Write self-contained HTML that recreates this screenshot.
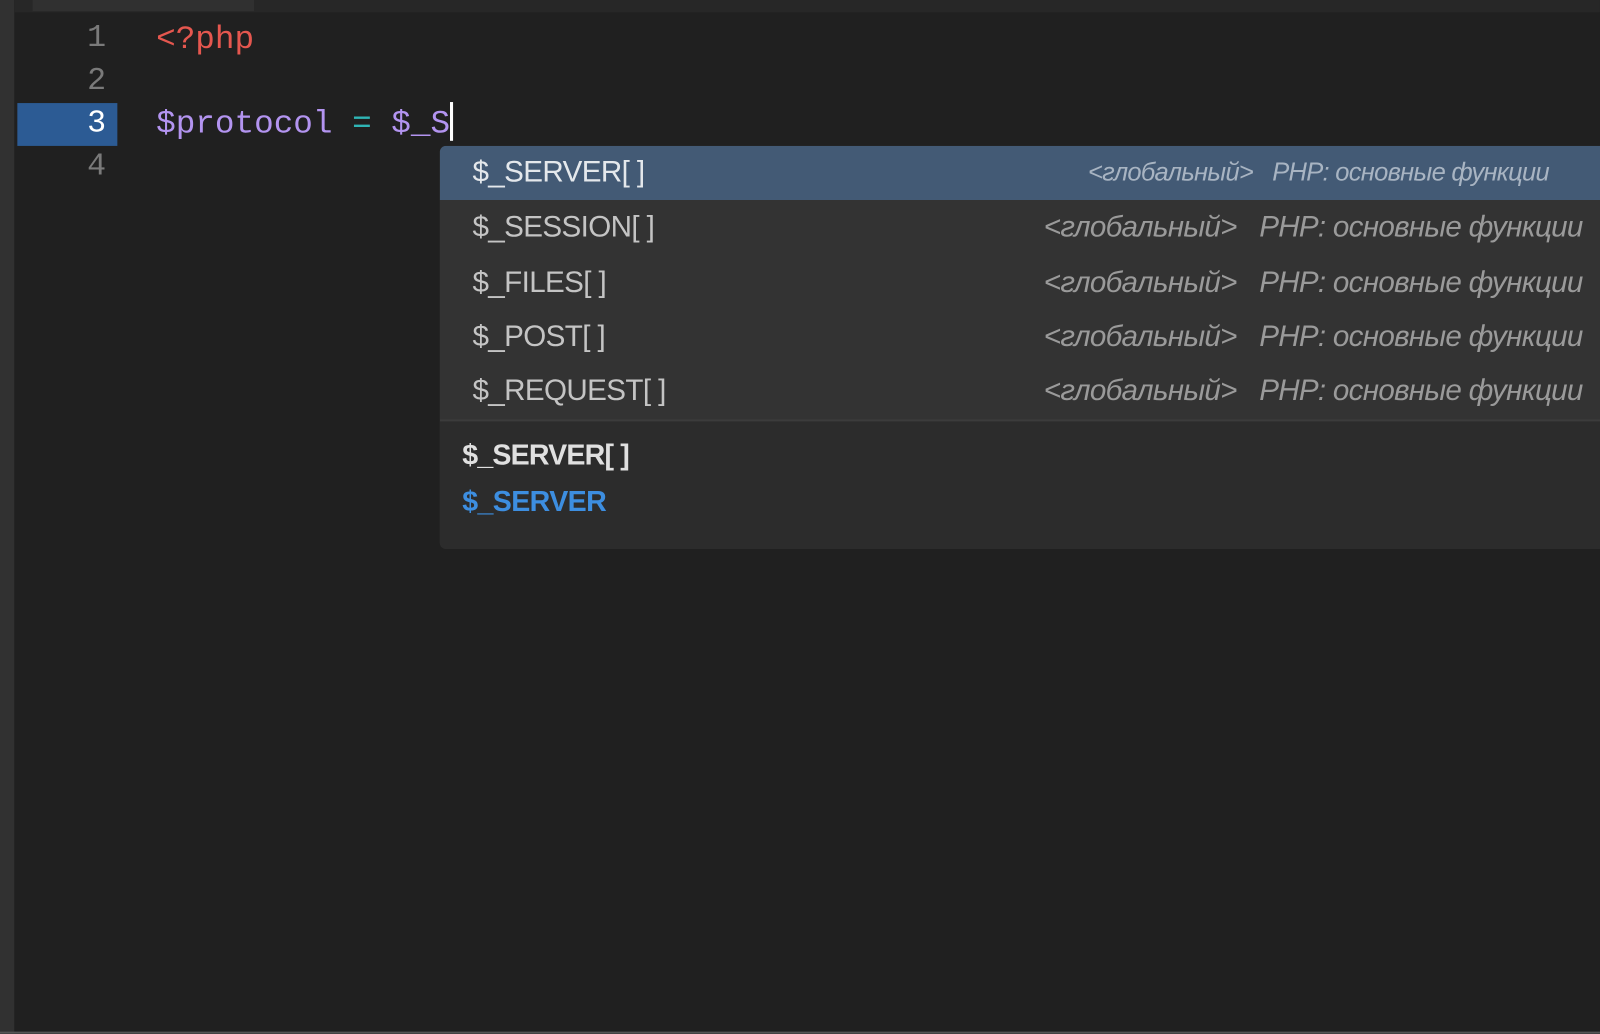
<!DOCTYPE html>
<html><head><meta charset="utf-8"><style>
html,body{margin:0;padding:0;}
body{width:1600px;height:1033px;background:#202020;position:relative;overflow:hidden;font-family:"Liberation Sans",sans-serif;}
#c{position:absolute;left:0;top:0;width:1568px;height:1013px;transform:scale(1.0204);transform-origin:0 0;}
.lstrip{position:absolute;left:0;top:0;width:14px;height:1013px;background:#313131;}
.topbar{position:absolute;left:14px;top:0;right:0;height:12px;background:#272727;}
.tab{position:absolute;left:18px;top:0;width:217px;height:11px;background:#303030;}
.bottom{position:absolute;left:0;bottom:0;width:1568px;height:2px;background:#555;}
.ln{position:absolute;left:17px;width:98px;height:42px;line-height:42px;text-align:right;box-sizing:border-box;padding-right:11px;font-family:"Liberation Mono",monospace;font-size:31px;color:#7a7a7a;}
.ln.cur{background:#2c5b94;color:#fff;}
.code{position:absolute;left:153px;height:42px;line-height:42px;font-family:"Liberation Mono",monospace;font-size:32px;white-space:pre;}
.caret{display:inline-block;width:3px;height:38px;background:#fff;vertical-align:middle;margin-top:-6px;}
.pop{position:absolute;left:431px;top:143px;width:1150px;height:395px;background:#333333;border-radius:6px;overflow:hidden;}
.row{position:absolute;left:0;width:100%;height:54px;}
.row.sel{background:#435a75;height:53px;}
.name{position:absolute;left:32px;top:0;line-height:54px;font-size:29px;color:#c4c4c4;white-space:pre;letter-spacing:-0.6px;}
.row.sel .name{color:#e4e8ec;line-height:53px;}
.desc{position:absolute;right:30px;top:0;line-height:54px;font-size:29px;font-style:italic;color:#9a9a9a;white-space:pre;letter-spacing:-0.7px;}
.row.sel .desc{right:63px;color:#a8b4c2;font-size:25px;line-height:53px;}
.detail{position:absolute;left:0;top:268px;width:100%;height:127px;background:#2c2c2c;border-top:2px solid #3c3c3c;}
.d1{position:absolute;left:22px;top:17px;font-size:28px;font-weight:bold;color:#e0e0e0;letter-spacing:-0.8px;white-space:pre;}
.d2{position:absolute;left:22px;top:63px;font-size:28px;font-weight:bold;color:#3d8ee0;letter-spacing:-0.6px;}
</style></head><body>
<div id="c">
<div class="lstrip"></div>
<div class="topbar"><div class="tab"></div></div>
<div class="ln" style="top:17px">1</div>
<div class="ln" style="top:59px">2</div>
<div class="ln cur" style="top:101px">3</div>
<div class="ln" style="top:143px">4</div>
<div class="code" style="top:18px;color:#e5574f">&lt;?php</div>
<div class="code" style="top:101px"><span style="color:#b394f0">$protocol</span> <span style="color:#2fb5b5">=</span> <span style="color:#b394f0">$_S</span><span class="caret"></span></div>
<div class="pop">
<div class="row sel" style="top:0"><div class="name">$_SERVER[ ]</div><div class="desc">&lt;глобальный&gt;   PHP: основные функции</div></div>
<div class="row" style="top:53px"><div class="name">$_SESSION[ ]</div><div class="desc">&lt;глобальный&gt;   PHP: основные функции</div></div>
<div class="row" style="top:107px"><div class="name">$_FILES[ ]</div><div class="desc">&lt;глобальный&gt;   PHP: основные функции</div></div>
<div class="row" style="top:160px"><div class="name">$_POST[ ]</div><div class="desc">&lt;глобальный&gt;   PHP: основные функции</div></div>
<div class="row" style="top:213px"><div class="name">$_REQUEST[ ]</div><div class="desc">&lt;глобальный&gt;   PHP: основные функции</div></div>
<div class="detail"><div class="d1">$_SERVER[ ]</div><div class="d2">$_SERVER</div></div>
</div>
<div class="bottom"></div>
</div>
</body></html>
